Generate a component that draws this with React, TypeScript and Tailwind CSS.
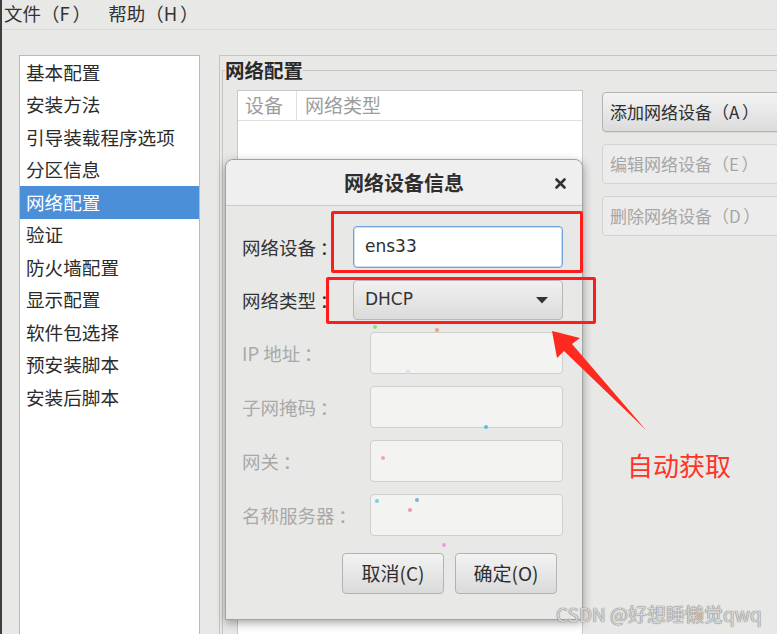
import React from "react";

const CJK = "font-['Noto_Sans_CJK_SC','Noto_Sans',sans-serif]";

const listItems = [
  "基本配置",
  "安装方法",
  "引导装载程序选项",
  "分区信息",
  "网络配置",
  "验证",
  "防火墙配置",
  "显示配置",
  "软件包选择",
  "预安装脚本",
  "安装后脚本",
];

const dots: { x: number; y: number; c: string }[] = [
  { x: 375, y: 327, c: "#86e07e" },
  { x: 437, y: 330, c: "#e8a478" },
  { x: 408, y: 372, c: "#f3d2f3" },
  { x: 486, y: 427, c: "#62b9e2" },
  { x: 383, y: 458, c: "#f4a6ac" },
  { x: 377, y: 501, c: "#72d2e2" },
  { x: 417, y: 500, c: "#78b4d4" },
  { x: 410, y: 510, c: "#ec98b6" },
  { x: 390, y: 538, c: "#f2e2f2" },
  { x: 444, y: 545, c: "#f39ad8" },
];

function Paren({ letter }: { letter: string }) {
  return (
    <>
      <span className="inline-block w-[1em] text-right">（</span>
      {letter}
      <span className="inline-block w-[1em] text-left pl-[0.15em]">）</span>
    </>
  );
}

function Label({ text, dim }: { text: string; dim?: boolean }) {
  return (
    <span className={`text-[18.5px] leading-[24px] ${dim ? "text-[#a9a9a9]" : "text-[#333]"}`}>
      {text}
      <span className="inline-block w-[1em] text-center pl-[0.2em]">：</span>
    </span>
  );
}

function DisabledRow({ label }: { label: string }) {
  return (
    <div className="flex items-center justify-between">
      <Label text={label} dim />
      <div className="w-[193px] h-[42px] rounded-[4px] border border-[#cfcfcf] bg-[#f3f3f2]" />
    </div>
  );
}

export default function App() {
  return (
    <div
      className={`relative w-[777px] h-[634px] overflow-hidden bg-[#e8e8e7] border-l-2 border-[#3e3e3e] text-[#2e2e2e] ${CJK}`}
    >
      {/* menubar */}
      <div className="h-[30px] flex items-center gap-[20px] pl-[2px] pb-[3px] border-b border-[#d8d8d8] text-[18.5px] leading-[24px] text-[#333]">
        <span>
          文件
          <Paren letter="F" />
        </span>
        <span>
          帮助
          <Paren letter="H" />
        </span>
      </div>

      {/* body */}
      <div className="flex pl-[17px] pt-[25px] gap-[19px] h-[604px]">
        {/* list */}
        <div className="w-[181px] h-[600px] shrink-0 bg-white border border-[#b9b9b9] text-[18.6px]">
          {listItems.map((t, i) => (
            <div
              key={t}
              className={`h-[32.5px] flex items-center pl-[6px] pb-[1px] ${
                i === 4 ? "bg-[#4a8fd8] text-white" : "text-[#2b2b2b]"
              }`}
            >
              {t}
            </div>
          ))}
        </div>

        {/* main panel */}
        <div className="flex-1 h-[600px] border-l border-t border-[#c4c4c4]">
          <fieldset className="mt-[2px] ml-[2px] min-w-0 h-[620px] border border-[#c4c4c4]">
            <legend className="ml-[2px] text-[19.5px] leading-[24px] font-bold text-[#2a2a2a]">
              网络配置
            </legend>
            <div className="flex pl-[14px] pt-[8px] gap-[19px]">
              {/* table */}
              <div className="w-[346px] h-[600px] shrink-0 bg-white border border-[#c8c8c8]">
                <div className="flex h-[30px] border-b border-[#e0e0e0] text-[19px] text-[#9d9d9d]">
                  <div className="w-[59px] pl-[7px] flex items-center border-r border-[#e0e0e0]">
                    设备
                  </div>
                  <div className="pl-[8px] flex items-center">网络类型</div>
                </div>
              </div>
              {/* right buttons */}
              <div className="flex flex-col gap-[12px] pt-[2px] shrink-0">
                <div className="w-[200px] h-[40px] flex items-center pl-[7px] rounded-[4px] border border-[#b3b3b3] bg-gradient-to-b from-[#f3f3f3] to-[#dcdcdc] text-[17px] text-[#2e2e2e] shadow-[0_1px_0_rgba(0,0,0,0.06)] whitespace-nowrap">
                  <span>
                    添加网络设备
                    <Paren letter="A" />
                  </span>
                </div>
                <div className="w-[200px] h-[40px] flex items-center pl-[7px] rounded-[4px] border border-[#d3d3d3] bg-[#ececec] text-[17px] text-[#a6a6a6] whitespace-nowrap">
                  <span>
                    编辑网络设备
                    <Paren letter="E" />
                  </span>
                </div>
                <div className="w-[200px] h-[40px] flex items-center pl-[7px] rounded-[4px] border border-[#d3d3d3] bg-[#ececec] text-[17px] text-[#a6a6a6] whitespace-nowrap">
                  <span>
                    删除网络设备
                    <Paren letter="D" />
                  </span>
                </div>
              </div>
            </div>
          </fieldset>
        </div>
      </div>

      {/* dialog */}
      <div className="absolute left-[223px] top-[159px] w-[358px] h-[461px] flex flex-col rounded-t-[8px] border border-[#a2a2a2] bg-[#e8e8e7] shadow-[0_3px_10px_rgba(0,0,0,0.35)]">
        <div className="relative h-[46px] shrink-0 flex items-center justify-center rounded-t-[8px] bg-[#efefef] border-b border-[#cbcbcb]">
          <span className="text-[20px] font-bold text-[#2e2e2e]">网络设备信息</span>
          <svg
            className="absolute right-[16px] top-[18px]"
            width="11"
            height="11"
            viewBox="0 0 11 11"
          >
            <path d="M1.5 1.5 L9.5 9.5 M9.5 1.5 L1.5 9.5" stroke="#333" strokeWidth="2.6" strokeLinecap="round" />
          </svg>
        </div>
        <div className="flex flex-col gap-[12px] pt-[20px] pl-[16px] pr-[19px]">
          <div className="flex items-center justify-between">
            <Label text="网络设备" />
            <div className="w-[210px] h-[42px] flex items-center pl-[11px] rounded-[4px] border border-[#6fa2dc] bg-white shadow-[inset_0_0_0_1px_rgba(111,162,220,0.35)] font-['DejaVu_Sans',sans-serif] text-[17px] text-[#2e2e2e]">
              ens33
            </div>
          </div>
          <div className="flex items-center justify-between">
            <Label text="网络类型" />
            <div className="w-[210px] h-[40px] flex items-center justify-between pl-[11px] pr-[14px] rounded-[4px] border border-[#b7b7b7] bg-gradient-to-b from-[#f1f1f1] to-[#dbdbdb] font-['DejaVu_Sans',sans-serif] text-[17px] text-[#333]">
              <span>DHCP</span>
              <svg width="12" height="7" viewBox="0 0 12 7">
                <path d="M0 0 L12 0 L6 6.5 Z" fill="#333" />
              </svg>
            </div>
          </div>
          <DisabledRow label="IP 地址" />
          <DisabledRow label="子网掩码" />
          <DisabledRow label="网关" />
          <DisabledRow label="名称服务器" />
          <div className="flex justify-end gap-[11px] mt-[5px] pr-[6px]">
            <div className="w-[102px] h-[41px] flex items-center justify-center rounded-[4px] border border-[#b3b3b3] bg-gradient-to-b from-[#f3f3f3] to-[#dadada] text-[19px] text-[#2e2e2e]">
              取消(C)
            </div>
            <div className="w-[102px] h-[41px] flex items-center justify-center rounded-[4px] border border-[#b3b3b3] bg-gradient-to-b from-[#f3f3f3] to-[#dadada] text-[19px] text-[#2e2e2e]">
              确定(O)
            </div>
          </div>
        </div>
      </div>

      {/* scattered dots */}
      {dots.map((d, i) => (
        <span
          key={i}
          className="absolute w-[4px] h-[4px] rounded-full"
          style={{ left: d.x - 4, top: d.y - 2, background: d.c }}
        />
      ))}

      {/* red annotation boxes */}
      <div className="absolute left-[329px] top-[211px] w-[252px] h-[62px] border-[3px] border-[#ff1c1c] rounded-[2px]" />
      <div className="absolute left-[324px] top-[277px] w-[270px] h-[47px] border-[3px] border-[#ff1c1c] rounded-[2px]" />

      {/* arrow */}
      <svg className="absolute left-[-2px] top-0 pointer-events-none" width="777" height="634" viewBox="0 0 777 634">
        <polygon
          points="552,331 580,338 572,344 646,430 564,351 557,358"
          fill="#ff2a1f"
        />
      </svg>

      {/* annotation text */}
      <div className="absolute left-[625px] top-[450px] text-[26px] leading-[30px] text-[#ff3328]">
        自动获取
      </div>

      {/* watermark */}
      <div className="absolute left-[554px] top-[603px] text-[19px] leading-[22px] text-[#d6d6d6] [text-shadow:0_0_1px_#7a7a7a,0_0_1px_#7a7a7a] whitespace-nowrap">
        CSDN @好想睡懒觉qwq
      </div>
    </div>
  );
}
